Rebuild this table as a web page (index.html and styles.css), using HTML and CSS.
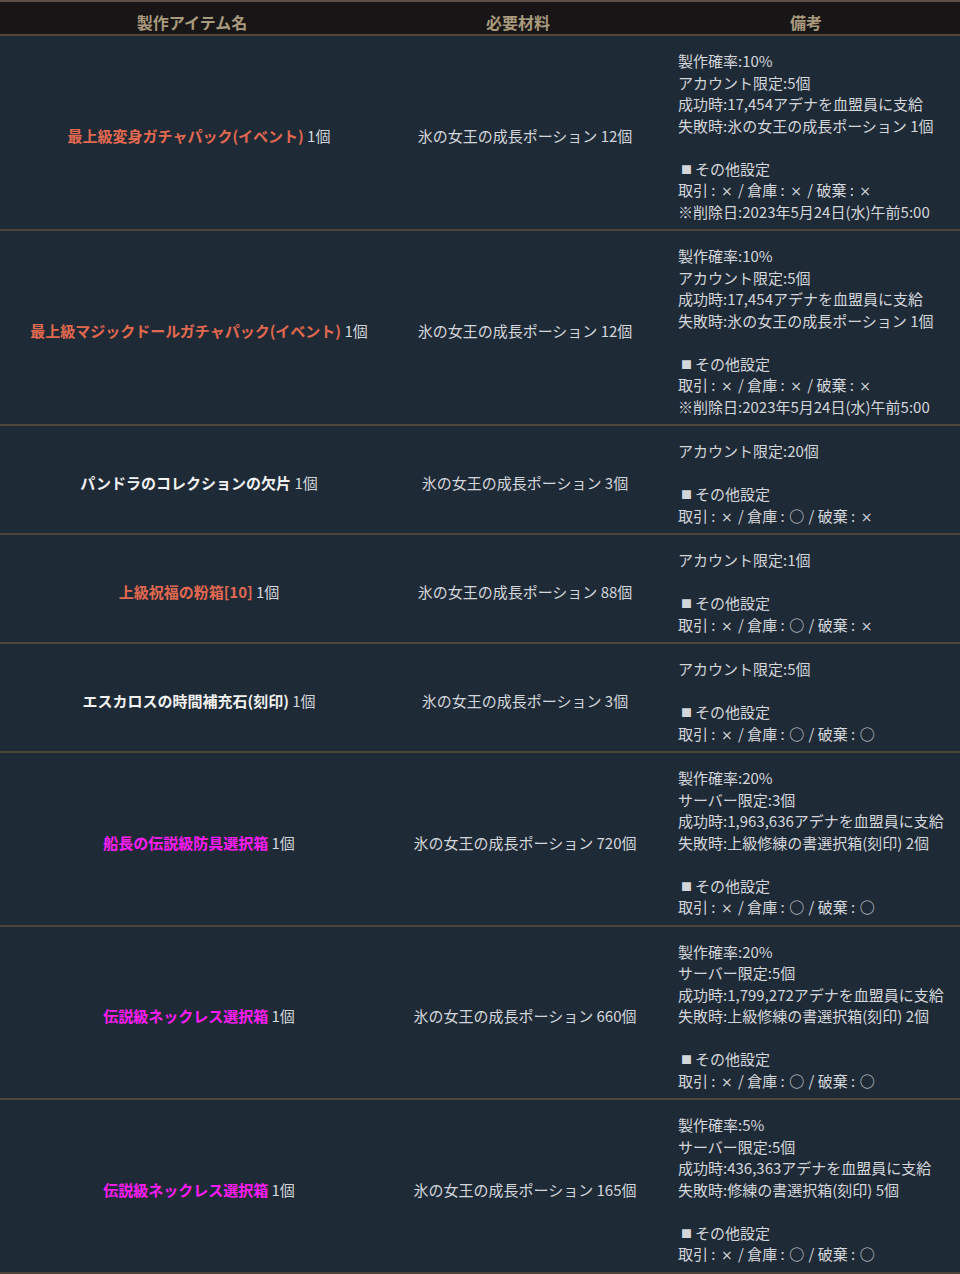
FILE: index.html
```html
<!DOCTYPE html>
<html lang="ja">
<head>
<meta charset="utf-8">
<title>製作アイテム</title>
<link rel="stylesheet" href="styles.css">
</head>
<body>
<table class="craft">
  <colgroup>
    <col class="c-item">
    <col class="c-mat">
    <col class="c-note">
  </colgroup>
  <thead>
    <tr>
      <th>製作アイテム名</th>
      <th>必要材料</th>
      <th>備考</th>
    </tr>
  </thead>
  <tbody>
    <tr>
      <td class="item"><span class="name orange">最上級変身ガチャパック(イベント)</span> 1個</td>
      <td class="mat">氷の女王の成長ポーション 12個</td>
      <td class="note">製作確率:10%<br>アカウント限定:5個<br>成功時:17,454アデナを血盟員に支給<br>失敗時:氷の女王の成長ポーション 1個<br><br><span class="sq">■</span>その他設定<br>取引 : <span class="mk">×</span> / 倉庫 : <span class="mk">×</span> / 破棄 : <span class="mk">×</span><br>※削除日:2023年5月24日(水)午前5:00</td>
    </tr>
    <tr>
      <td class="item"><span class="name orange">最上級マジックドールガチャパック(イベント)</span> 1個</td>
      <td class="mat">氷の女王の成長ポーション 12個</td>
      <td class="note">製作確率:10%<br>アカウント限定:5個<br>成功時:17,454アデナを血盟員に支給<br>失敗時:氷の女王の成長ポーション 1個<br><br><span class="sq">■</span>その他設定<br>取引 : <span class="mk">×</span> / 倉庫 : <span class="mk">×</span> / 破棄 : <span class="mk">×</span><br>※削除日:2023年5月24日(水)午前5:00</td>
    </tr>
    <tr>
      <td class="item"><span class="name white">パンドラのコレクションの欠片</span> 1個</td>
      <td class="mat">氷の女王の成長ポーション 3個</td>
      <td class="note">アカウント限定:20個<br><br><span class="sq">■</span>その他設定<br>取引 : <span class="mk">×</span> / 倉庫 : <span class="ci">○</span> / 破棄 : <span class="mk">×</span></td>
    </tr>
    <tr>
      <td class="item"><span class="name orange">上級祝福の粉箱[10]</span> 1個</td>
      <td class="mat">氷の女王の成長ポーション 88個</td>
      <td class="note">アカウント限定:1個<br><br><span class="sq">■</span>その他設定<br>取引 : <span class="mk">×</span> / 倉庫 : <span class="ci">○</span> / 破棄 : <span class="mk">×</span></td>
    </tr>
    <tr>
      <td class="item"><span class="name white">エスカロスの時間補充石(刻印)</span> 1個</td>
      <td class="mat">氷の女王の成長ポーション 3個</td>
      <td class="note">アカウント限定:5個<br><br><span class="sq">■</span>その他設定<br>取引 : <span class="mk">×</span> / 倉庫 : <span class="ci">○</span> / 破棄 : <span class="ci">○</span></td>
    </tr>
    <tr>
      <td class="item"><span class="name magenta">船長の伝説級防具選択箱</span> 1個</td>
      <td class="mat">氷の女王の成長ポーション 720個</td>
      <td class="note">製作確率:20%<br>サーバー限定:3個<br>成功時:1,963,636アデナを血盟員に支給<br>失敗時:上級修練の書選択箱(刻印) 2個<br><br><span class="sq">■</span>その他設定<br>取引 : <span class="mk">×</span> / 倉庫 : <span class="ci">○</span> / 破棄 : <span class="ci">○</span></td>
    </tr>
    <tr>
      <td class="item"><span class="name magenta">伝説級ネックレス選択箱</span> 1個</td>
      <td class="mat">氷の女王の成長ポーション 660個</td>
      <td class="note">製作確率:20%<br>サーバー限定:5個<br>成功時:1,799,272アデナを血盟員に支給<br>失敗時:上級修練の書選択箱(刻印) 2個<br><br><span class="sq">■</span>その他設定<br>取引 : <span class="mk">×</span> / 倉庫 : <span class="ci">○</span> / 破棄 : <span class="ci">○</span></td>
    </tr>
    <tr>
      <td class="item"><span class="name magenta">伝説級ネックレス選択箱</span> 1個</td>
      <td class="mat">氷の女王の成長ポーション 165個</td>
      <td class="note">製作確率:5%<br>サーバー限定:5個<br>成功時:436,363アデナを血盟員に支給<br>失敗時:修練の書選択箱(刻印) 5個<br><br><span class="sq">■</span>その他設定<br>取引 : <span class="mk">×</span> / 倉庫 : <span class="ci">○</span> / 破棄 : <span class="ci">○</span></td>
    </tr>
  </tbody>
</table>
</body>
</html>
```

FILE: styles.css
```css
html, body {
  margin: 0;
  padding: 0;
  background: #1f2a37;
}

body {
  font-family: "Noto Sans CJK JP", "Noto Sans", sans-serif;
  font-size: 15px;
  color: #d3d6da;
}

.craft {
  width: 960px;
  border-collapse: collapse;
  table-layout: fixed;
  background: #1f2a37;
}

.c-item { width: 384px; }
.c-mat { width: 268px; }
.c-note { width: 308px; }

.craft thead tr {
  background: #171515;
  border-top: 2px solid #5a5048;
  border-bottom: 2px solid #54473a;
}

.craft th {
  height: 32px;
  box-sizing: border-box;
  padding: 9px 0 1px;
  line-height: 22px;
  font-size: 16px;
  font-weight: bold;
  color: #a99a7e;
  text-align: center;
}

.craft tbody tr {
  border-bottom: 2px solid #4f4438;
}

.craft td {
  padding: 14px 0 7px;
  line-height: 21.5px;
  vertical-align: middle;
}

.craft td.item,
.craft td.mat {
  text-align: center;
  padding-left: 14px;
}

.craft td.note {
  text-align: left;
  padding-left: 26px;
  white-space: nowrap;
}

.sq {
  font-size: 11px;
  line-height: 0;
  margin: 0 3px;
  vertical-align: 1px;
}

.mk {
  font-family: "DejaVu Sans", sans-serif;
  font-size: 14px;
  line-height: 0;
  margin: 0 2px;
}

.ci {
  line-height: 0;
  margin: 0 1px;
}

.name {
  font-weight: bold;
}

.orange { color: #e2694f; }
.white { color: #f2f2f2; }
.magenta { color: #ff1cf5; }
```
